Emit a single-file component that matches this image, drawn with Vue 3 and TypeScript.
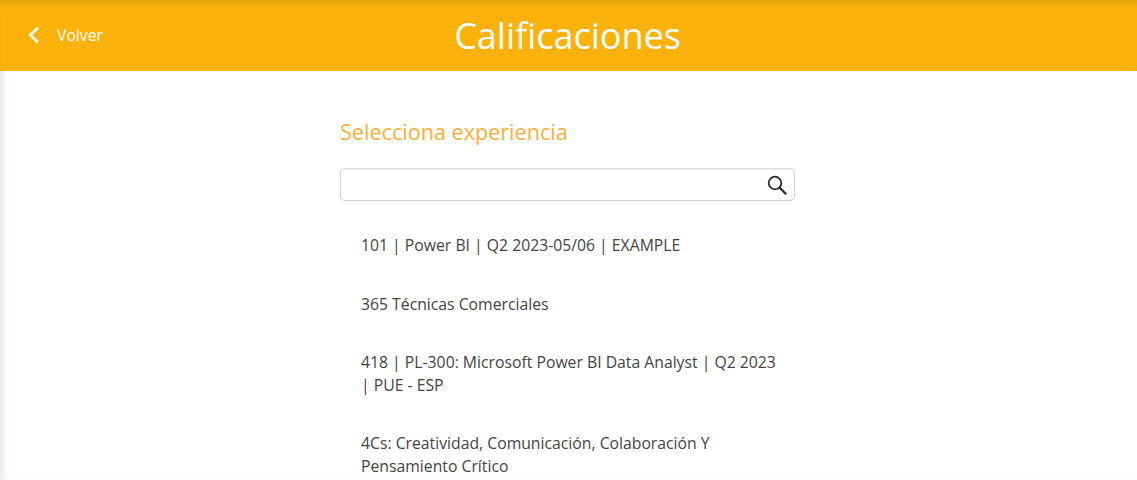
<template>
  <div class="page">
    <header class="topbar">
      <a class="back-link">
        <svg class="back-icon" width="12" height="18" viewBox="0 0 12 18">
          <path d="M10 1.8 L2.2 9 L10 16.2" fill="none" stroke="#fff" stroke-width="2.6" />
        </svg>
        <span>Volver</span>
      </a>
      <h1 class="title">Calificaciones</h1>
    </header>

    <main class="content">
      <h2 class="subtitle">Selecciona experiencia</h2>

      <div class="search-box">
        <input class="search-input" type="text" />
        <svg class="search-icon" width="20" height="20" viewBox="0 0 20 20">
          <circle cx="8" cy="8" r="6.3" fill="none" stroke="#2d2d2d" stroke-width="1.8" />
          <path d="M12.6 12.6 L19.2 19.2" fill="none" stroke="#2d2d2d" stroke-width="2.2" />
        </svg>
      </div>

      <ul class="experience-list">
        <li v-for="item in experiences" :key="item" class="experience-item">{{ item }}</li>
      </ul>
    </main>
  </div>
</template>

<script setup lang="ts">
const experiences: string[] = [
  '101 | Power BI | Q2 2023-05/06 | EXAMPLE',
  '365 Técnicas Comerciales',
  '418 | PL-300: Microsoft Power BI Data Analyst | Q2 2023 | PUE - ESP',
  '4Cs: Creatividad, Comunicación, Colaboración Y Pensamiento Crítico',
];
</script>

<style>
html,
body {
  margin: 0;
  height: 100%;
  overflow: hidden;
  background: #fff;
}
</style>

<style scoped>
.page {
  height: 480px;
  overflow: hidden;
  font-family: "Open Sans", sans-serif;
  color: #444;
  box-shadow: inset 8px 0 8px -6px rgba(0, 0, 0, 0.12);
}

.topbar {
  position: relative;
  height: 71px;
  box-sizing: border-box;
  padding-right: 2px;
  display: flex;
  align-items: center;
  justify-content: center;
  background: #fcb20a;
  box-shadow: inset 0 8px 8px -6px rgba(0, 0, 0, 0.14);
}

.back-link {
  position: absolute;
  left: 28px;
  top: 25px;
  display: flex;
  align-items: center;
  gap: 17px;
  color: #fff;
  font-size: 15.75px;
  line-height: 20px;
}

.title {
  margin: 0;
  color: #fff;
  font-size: 36px;
  font-weight: 400;
  line-height: 71px;
}

.content {
  width: 455px;
  margin-left: 340px;
  padding-top: 46px;
}

.subtitle {
  margin: 0;
  color: #fdae33;
  font-size: 21.6px;
  font-weight: 400;
  line-height: 29px;
}

.search-box {
  position: relative;
  height: 33px;
  margin-top: 22px;
}

.search-input {
  display: block;
  width: 100%;
  height: 33px;
  box-sizing: border-box;
  border: 1px solid #cfcfcf;
  border-top-color: #dedede;
  border-radius: 5px;
  background: #fff;
  box-shadow: inset 0 1px 1px rgba(0, 0, 0, 0.08);
  outline: none;
}

.search-icon {
  position: absolute;
  right: 8px;
  top: 7px;
}

.experience-list {
  list-style: none;
  margin: 0;
  padding: 21px 0 0;
}

.experience-item {
  padding: 12px 15px 12px 21px;
  margin-bottom: 12px;
  font-size: 15.75px;
  line-height: 22.5px;
}
</style>
